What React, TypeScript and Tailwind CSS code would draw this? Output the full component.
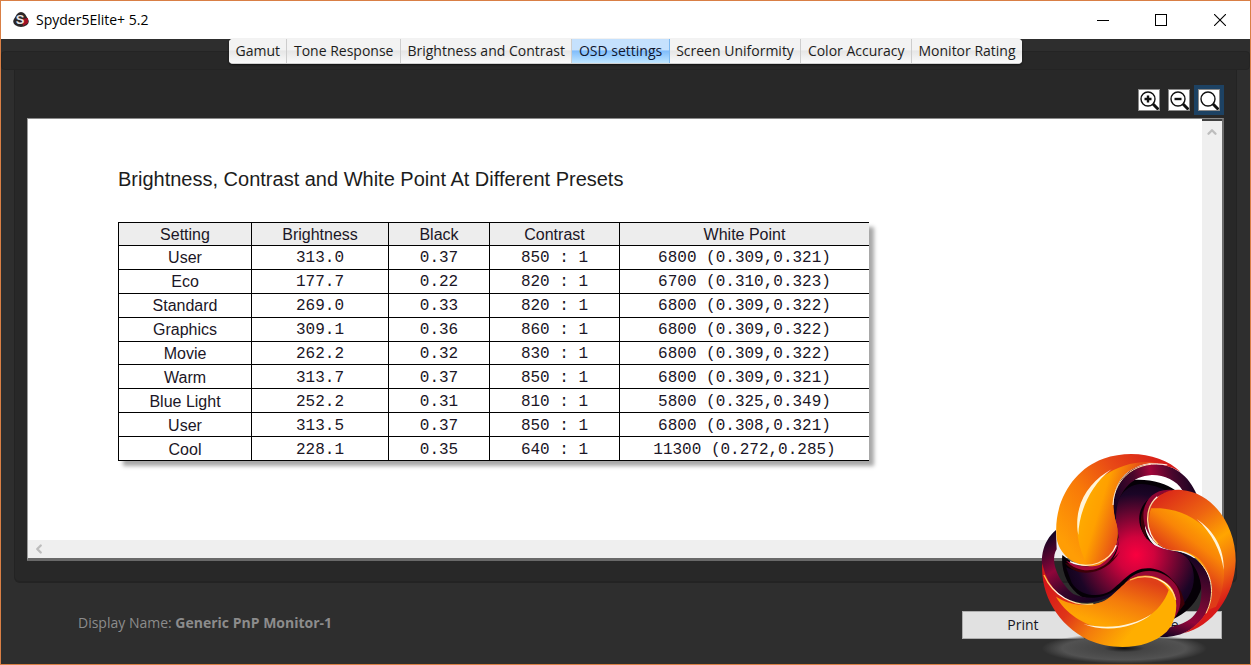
import { ReactNode } from 'react';
import { ChevronLeft, ChevronUp } from 'lucide-react';

const tabs = [
  'Gamut',
  'Tone Response',
  'Brightness and Contrast',
  'OSD settings',
  'Screen Uniformity',
  'Color Accuracy',
  'Monitor Rating',
];

const columns = ['Setting', 'Brightness', 'Black', 'Contrast', 'White Point'];

const rows = [
  ['User', '313.0', '0.37', '850 : 1', '6800 (0.309,0.321)'],
  ['Eco', '177.7', '0.22', '820 : 1', '6700 (0.310,0.323)'],
  ['Standard', '269.0', '0.33', '820 : 1', '6800 (0.309,0.322)'],
  ['Graphics', '309.1', '0.36', '860 : 1', '6800 (0.309,0.322)'],
  ['Movie', '262.2', '0.32', '830 : 1', '6800 (0.309,0.322)'],
  ['Warm', '313.7', '0.37', '850 : 1', '6800 (0.309,0.321)'],
  ['Blue Light', '252.2', '0.31', '810 : 1', '5800 (0.325,0.349)'],
  ['User', '313.5', '0.37', '850 : 1', '6800 (0.308,0.321)'],
  ['Cool', '228.1', '0.35', '640 : 1', '11300 (0.272,0.285)'],
];

function AppIcon() {
  return (
    <svg width="18" height="18" viewBox="0 0 18 18" aria-hidden="true">
      <path d="M5 3 Q9 -1 13 3 L16 8 Q18 11 15 14 Q9 18 3 14 Q0 11 2 8 Z" fill="#2b2727" />
      <path d="M10 8 L16 7 L16 12 L11 15 Z" fill="#a01026" />
      <text x="8" y="13" textAnchor="middle" fontSize="13" fontWeight="700" fontFamily="Liberation Sans, sans-serif" fill="#e8e4e4">
        S
      </text>
    </svg>
  );
}

function TitleBar() {
  return (
    <header className="flex h-[38px] shrink-0 items-center bg-white pl-[11px] text-black">
      <AppIcon />
      <h1 className="ml-[6px] flex-1 text-[14px] leading-5">Spyder5Elite+ 5.2</h1>
      <button aria-label="Minimize" className="flex h-full w-[58px] items-center justify-center">
        <svg width="12" height="12" shapeRendering="crispEdges">
          <path d="M0 6.5H12" stroke="#000" />
        </svg>
      </button>
      <button aria-label="Maximize" className="flex h-full w-[58px] items-center justify-center">
        <svg width="12" height="12" shapeRendering="crispEdges">
          <rect x="0.5" y="0.5" width="11" height="11" fill="none" stroke="#000" />
        </svg>
      </button>
      <button aria-label="Close window" className="flex h-full w-[60px] items-center justify-center">
        <svg width="12" height="12">
          <path d="M0 0L12 12M12 0L0 12" stroke="#000" strokeWidth="1.1" />
        </svg>
      </button>
    </header>
  );
}

function TabBar() {
  return (
    <div className="grid h-[31px] shrink-0 justify-items-center">
      <div className="col-start-1 row-start-1 mt-3 h-[19px] w-full rounded-[4px] border border-[#242424] bg-[#282828]" />
      <nav className="z-10 col-start-1 row-start-1 flex h-[25px] w-[793px] overflow-hidden rounded-[4px] border-b border-[#cfcfcf] bg-white shadow-[0_1px_2px_#111]">
        {tabs.map((tab) => (
          <button
            key={tab}
            className={`grow border-r px-[6px] text-[14px] leading-5 whitespace-nowrap last:border-r-0 ${
              tab === 'OSD settings'
                ? 'border-[#7db8ee] bg-linear-to-b from-[#c5e1fd] from-45% via-[#7fbcfb] via-50% to-[#c0e6ff] text-[#10162e]'
                : 'border-[#cdcdcd] bg-linear-to-b from-[#f3f3f3] from-45% via-[#e6e6e6] via-50% to-[#fafafa] text-[#1c1c1c]'
            }`}
          >
            {tab}
          </button>
        ))}
      </nav>
    </div>
  );
}

interface ZoomButtonProps {
  label: string;
  active?: boolean;
  children?: ReactNode;
}

function ZoomButton({ label, active = false, children }: ZoomButtonProps) {
  return (
    <button
      aria-label={label}
      className={`size-[22px] border border-[#8a8a8a] bg-white ${active ? 'outline-4 outline-[#1d4263]' : ''}`}
    >
      <svg width="20" height="20" viewBox="0 0 20 20" fill="none" stroke="#111">
        <circle cx="9" cy="9" r="7" strokeWidth="1.4" />
        <path d="M14 14L19.5 19.5" strokeWidth="3" />
        {children}
      </svg>
    </button>
  );
}

function PresetTable() {
  return (
    <table className="h-[239px] w-[751px] table-fixed border-collapse border-y border-l border-black bg-white text-center text-[#1b1626] shadow-[5px_5px_4px_#a8a8a8]">
      <colgroup>
        <col className="w-[133px]" />
        <col className="w-[137px]" />
        <col className="w-[101px]" />
        <col className="w-[130px]" />
        <col />
      </colgroup>
      <thead>
        <tr className="bg-[#ededed]">
          {columns.map((column) => (
            <th key={column} className="border border-black p-0 pt-[2px] text-[16px] leading-5 font-normal last:border-r-0">
              {column}
            </th>
          ))}
        </tr>
      </thead>
      <tbody>
        {rows.map((row, i) => (
          <tr key={i}>
            {row.map((cell, j) => (
              <td
                key={j}
                className={`border border-black p-0 pt-[2px] text-[16px] leading-5 last:border-r-0 ${
                  j > 0 ? "font-['Liberation_Mono',monospace]" : ''
                }`}
              >
                {cell}
              </td>
            ))}
          </tr>
        ))}
      </tbody>
    </table>
  );
}

function Report() {
  return (
    <div className="grid min-h-0 flex-1 grid-cols-[1fr_20px] grid-rows-[1fr_18px] border-t border-r-2 border-b-3 border-l border-t-[#8a8a8a] border-r-[#6c6c6c] border-b-[#696969] border-l-[#9a9a9a] bg-white">
      <section className="overflow-hidden pt-[48px] pl-[90px] font-['Liberation_Sans',sans-serif]">
        <h2 className="mb-[30px] text-[20px] leading-[25px] text-[#1c1c1c]">
          Brightness, Contrast and White Point At Different Presets
        </h2>
        <PresetTable />
      </section>
      <div className="flex justify-center border-t-2 border-[#404040] bg-[#efefef] pt-1">
        <ChevronUp size={14} strokeWidth={4} color="#bdbdbd" />
      </div>
      <div className="col-span-2 flex items-center bg-[#efefef] pl-1">
        <ChevronLeft size={14} strokeWidth={4} color="#bdbdbd" />
      </div>
    </div>
  );
}

function TriskelionLogo() {
  return (
    <svg
      className="pointer-events-none absolute -right-px -bottom-px h-[225px] w-[221px]"
      viewBox="0 0 663 675"
      fill="none"
      aria-hidden="true"
    >
      <defs>
        <radialGradient id="core" gradientUnits="userSpaceOnUse" cx="318" cy="345" r="215">
          <stop offset="0" stopColor="#fa003f" />
          <stop offset="0.25" stopColor="#d1033d" />
          <stop offset="0.6" stopColor="#650630" />
          <stop offset="0.85" stopColor="#1b0526" />
          <stop offset="1" stopColor="#12021c" />
        </radialGradient>
        <radialGradient id="floor">
          <stop offset="0" stopColor="#111" />
          <stop offset="0.25" stopColor="#444" />
          <stop offset="0.75" stopColor="#525252" />
          <stop offset="1" stopColor="#525252" stopOpacity="0" />
        </radialGradient>
        <linearGradient id="outerA" gradientUnits="userSpaceOnUse" x1="90" y1="290" x2="400" y2="50">
          <stop offset="0" stopColor="#ff9d05" />
          <stop offset="0.35" stopColor="#f87908" />
          <stop offset="0.65" stopColor="#e84916" />
          <stop offset="1" stopColor="#d71b19" />
        </linearGradient>
        <linearGradient id="innerA" gradientUnits="userSpaceOnUse" x1="150" y1="210" x2="280" y2="250">
          <stop offset="0" stopColor="#ffac00" />
          <stop offset="0.4" stopColor="#ffa000" />
          <stop offset="1" stopColor="#e54c18" />
        </linearGradient>
        <linearGradient id="outerB" gradientUnits="userSpaceOnUse" x1="380" y1="180" x2="590" y2="480">
          <stop offset="0" stopColor="#dc2c18" />
          <stop offset="0.3" stopColor="#ee6511" />
          <stop offset="0.55" stopColor="#ffa500" />
          <stop offset="0.78" stopColor="#f06b10" />
          <stop offset="1" stopColor="#d81a19" />
        </linearGradient>
        <linearGradient id="innerB" gradientUnits="userSpaceOnUse" x1="505" y1="235" x2="420" y2="345">
          <stop offset="0" stopColor="#ffa800" />
          <stop offset="0.45" stopColor="#f98507" />
          <stop offset="1" stopColor="#df3b18" />
        </linearGradient>
        <linearGradient id="outerC" gradientUnits="userSpaceOnUse" x1="270" y1="620" x2="50" y2="440">
          <stop offset="0" stopColor="#ffae00" />
          <stop offset="0.35" stopColor="#f37c0c" />
          <stop offset="0.65" stopColor="#df3518" />
          <stop offset="1" stopColor="#d51719" />
        </linearGradient>
        <linearGradient id="innerC" gradientUnits="userSpaceOnUse" x1="260" y1="565" x2="310" y2="410">
          <stop offset="0" stopColor="#ffa503" />
          <stop offset="0.5" stopColor="#f47b0c" />
          <stop offset="1" stopColor="#df3f18" />
        </linearGradient>
        <linearGradient id="bandA" gradientUnits="userSpaceOnUse" x1="250" y1="190" x2="500" y2="140">
          <stop offset="0" stopColor="#150322" />
          <stop offset="0.3" stopColor="#4b062b" />
          <stop offset="0.5" stopColor="#a1063a" />
          <stop offset="0.75" stopColor="#49062d" />
          <stop offset="1" stopColor="#150322" />
        </linearGradient>
        <linearGradient id="bandB" gradientUnits="userSpaceOnUse" x1="480" y1="350" x2="410" y2="590">
          <stop offset="0" stopColor="#150322" />
          <stop offset="0.5" stopColor="#6b0831" />
          <stop offset="0.75" stopColor="#93063a" />
          <stop offset="1" stopColor="#150322" />
        </linearGradient>
        <linearGradient id="bandC" gradientUnits="userSpaceOnUse" x1="70" y1="280" x2="200" y2="480">
          <stop offset="0" stopColor="#150322" />
          <stop offset="0.4" stopColor="#8f063a" />
          <stop offset="0.7" stopColor="#35052a" />
          <stop offset="1" stopColor="#150322" />
        </linearGradient>
        <linearGradient id="shine" x1="0" y1="0" x2="1" y2="1">
          <stop offset="0" stopColor="#ffb52b" />
          <stop offset="0.5" stopColor="#fff" />
          <stop offset="1" stopColor="#ffc34b" />
        </linearGradient>
      </defs>

      <ellipse cx="283" cy="625" rx="248" ry="46" fill="url(#floor)" />

      {/* core */}
      <path
        d="M258 270C245 180 270 121 320 119C370 118 410 132 435 150L380 170C335 205 330 275 375 318C400 333 440 330 465 342C512 366 526 428 507 463C492 498 462 522 432 536L420 450C380 410 325 402 290 425C252 470 200 485 155 470C112 445 92 390 97 345L140 378C190 394 265 355 258 270Z"
        fill="#050006"
      />
      <path
        d="M262 270C240 190 282 132 335 132C362 133 394 143 408 153C312 174 306 265 369 313C398 332 446 330 467 349C494 374 502 430 475 470L452 505C462 440 412 390 362 385C306 380 282 423 240 454C208 473 150 470 125 428L108 382C190 420 286 372 262 270Z"
        fill="url(#core)"
      />
      <path d="M400 156C325 180 318 260 352 299C337 252 343 205 375 170Z" fill="#3c0008" />
      <path d="M105 368C145 420 235 402 270 333C250 365 190 397 140 378Z" fill="#3c0008" />
      <path d="M318 404C370 372 452 408 464 492L438 526C445 452 390 400 318 404Z" fill="#3c0008" />

      {/* ribbons under the blades */}
      <path
        d="M250 240C240 155 270 98 330 78C405 58 472 92 501 166L458 152C440 120 400 104 365 105C335 107 312 118 295 135C268 162 256 200 258 250Z"
        fill="url(#bandA)"
      />
      <path
        d="M435 333C530 350 574 433 532 513C502 570 444 597 382 590L400 570C436 552 484 556 508 500C524 448 512 383 458 342Z"
        fill="url(#bandB)"
      />
      <path
        d="M78 270C36 305 24 365 48 420C82 485 170 508 242 469L274 440C220 480 170 480 130 462C92 432 56 368 80 328Z"
        fill="url(#bandC)"
      />
      <path d="M430 150C362 140 325 200 346 260C362 302 386 322 423 331L390 312C345 275 344 195 395 162Z" fill="#8e0632" />
      <path d="M108 362C160 418 260 392 269 289L262 300C246 365 180 398 120 367Z" fill="#a40838" />
      <path d="M285 430C325 373 408 386 440 438C460 474 450 512 434 534L438 480C420 420 350 385 285 430Z" fill="#960735" />

      {/* upper left blade */}
      <path
        d="M452 96C388 58 305 62 270 105C234 158 250 218 261 258C270 304 250 354 210 374C150 394 88 350 80 295C68 185 132 87 220 56C305 27 400 45 452 96Z"
        fill="url(#outerA)"
      />
      <path
        d="M375 67C260 55 154 135 142 235C137 282 150 340 175 378C238 377 273 322 260 255C238 180 247 82 375 67Z"
        fill="url(#innerA)"
      />
      <path d="M245 88C190 118 146 170 142 240C141 265 143 275 145 285C146 225 175 140 245 88Z" fill="#fff4d8" />
      <path d="M120 365C180 392 240 365 259 316" stroke="url(#shine)" strokeWidth="4" />
      <path d="M249 195C252 110 325 58 412 75" stroke="url(#shine)" strokeWidth="3" />

      {/* right blade */}
      <path
        d="M355 250C350 180 400 145 454 150C550 157 618 258 617 363C614 470 545 560 460 580C526 548 557 480 542 424C524 370 483 330 430 331C390 327 357 297 355 250Z"
        fill="url(#outerB)"
      />
      <path
        d="M363 205C474 197 577 276 582 390C583 425 574 470 558 500C545 505 540 506 535 510C572 420 518 325 430 331C382 325 342 270 363 205Z"
        fill="url(#innerB)"
      />
      <path d="M500 237C550 270 584 325 581 390C574 335 545 278 500 237Z" fill="#fff4d8" />
      <path d="M382 170C340 205 346 278 384 313" stroke="url(#shine)" strokeWidth="4" />
      <path d="M505 362C550 406 555 466 528 520" stroke="url(#shine)" strokeWidth="3" />

      {/* lower blade */}
      <path
        d="M280 435C326 387 400 406 428 449C447 486 441 542 410 575C356 627 253 634 175 600C86 557 30 465 37 370C53 458 128 510 205 489C237 480 260 458 280 435Z"
        fill="url(#outerC)"
      />
      <path
        d="M78 470C125 500 180 501 223 484C260 462 287 410 345 409C380 411 403 431 416 450C392 526 298 577 221 565C160 556 105 518 78 470Z"
        fill="url(#innerC)"
      />
      <path d="M160 552C230 580 320 562 365 522C315 556 235 571 160 552Z" fill="#fff4d8" />
      <path d="M300 420C352 396 422 416 437 480" stroke="url(#shine)" strokeWidth="4" />
      <path d="M42 405C70 468 130 499 190 492" stroke="url(#shine)" strokeWidth="4" />
    </svg>
  );
}

const footerButton =
  'h-7 w-[122px] border border-[#adadad] bg-[#e1e1e1] text-[14px] leading-5 text-[#151522]';

export default function App() {
  return (
    <div className="relative flex h-screen flex-col overflow-hidden border border-[#d97f45] bg-[#2e2e2e] font-['Open_Sans',sans-serif]">
      <TitleBar />
      <TabBar />
      <main className="mx-[13px] flex min-h-0 flex-1 flex-col rounded-b-[6px] border-x border-b-2 border-[#232323] bg-[#282828] px-3 pb-5">
        <div className="flex justify-end gap-2 pt-[19px] pr-1 pb-[7px]">
          <ZoomButton label="Zoom in">
            <path d="M5.5 9H12.5M9 5.5V12.5" strokeWidth="2.4" />
          </ZoomButton>
          <ZoomButton label="Zoom out">
            <path d="M5.5 9H12.5" strokeWidth="2.4" />
          </ZoomButton>
          <ZoomButton label="Actual size" active />
        </div>
        <Report />
      </main>
      <footer className="flex h-[81px] shrink-0 items-start justify-between pt-7 pr-7 pl-[77px]">
        <p className="text-[14px] leading-6 text-[#8c8c8c]">
          Display Name: <strong>Generic PnP Monitor-1</strong>
        </p>
        <div className="flex gap-4">
          <button className={footerButton}>Print</button>
          <button className={footerButton}>Close</button>
        </div>
      </footer>
      <TriskelionLogo />
    </div>
  );
}
